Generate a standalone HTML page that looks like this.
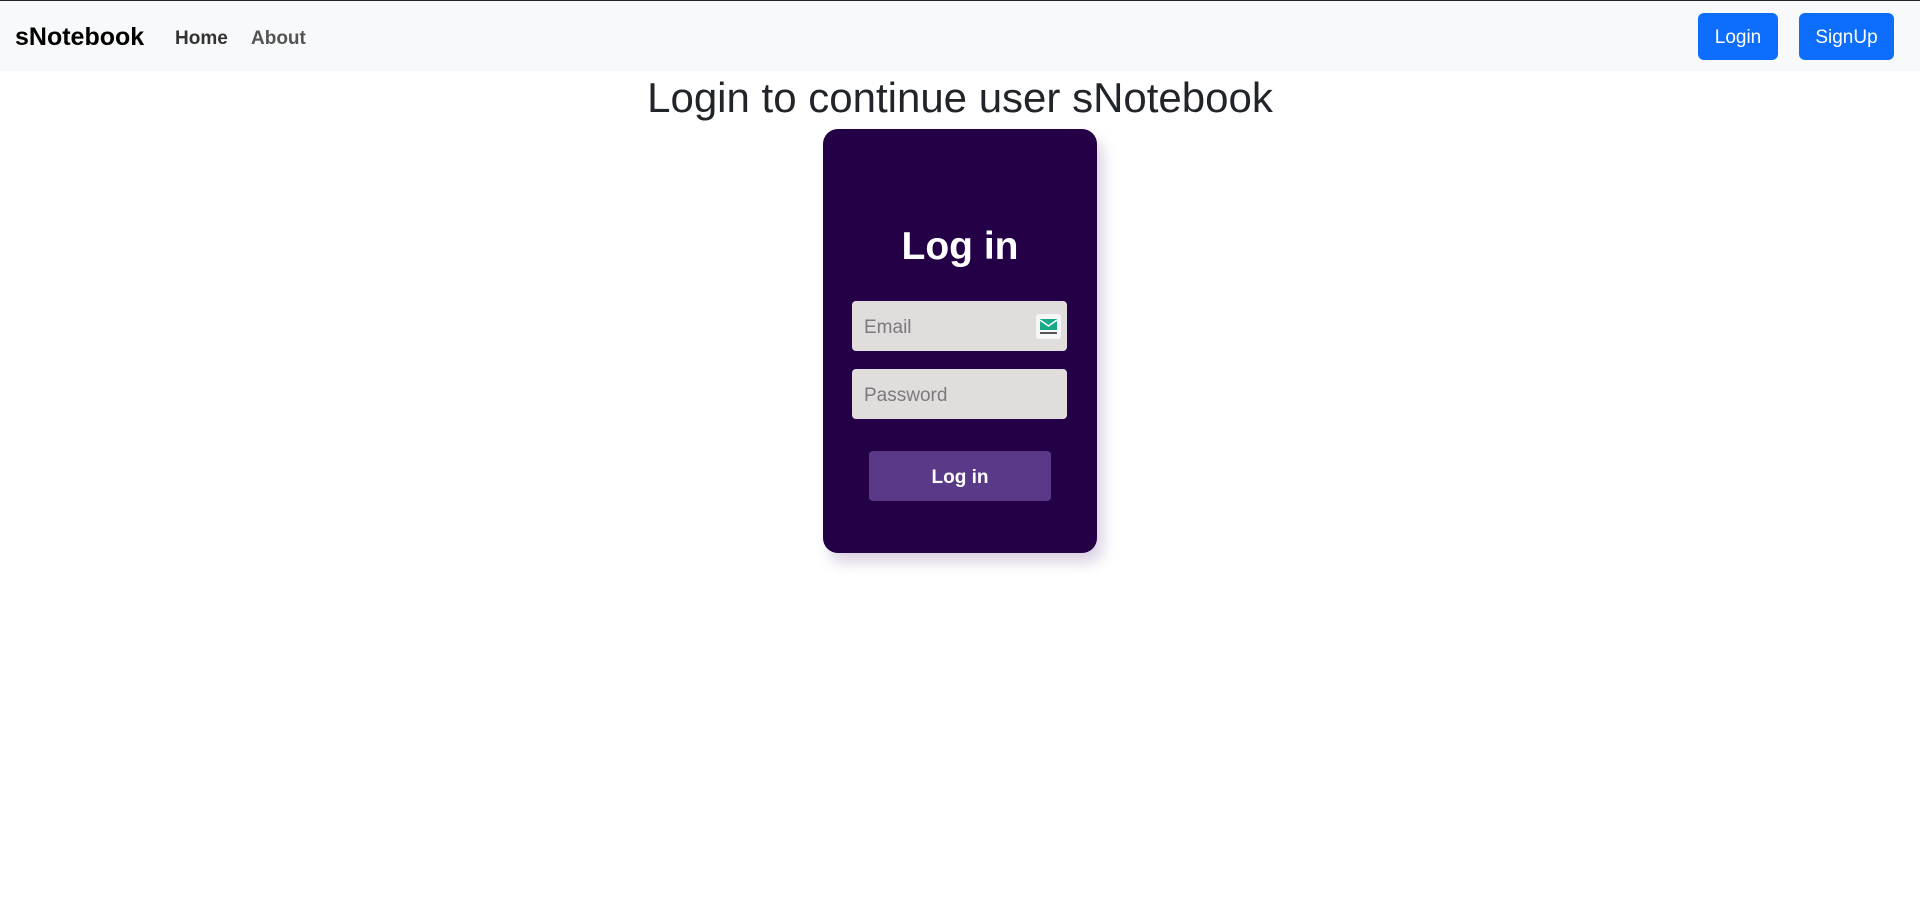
<!DOCTYPE html>
<html><head><style>
*{box-sizing:border-box;margin:0;padding:0}
body{width:1920px;height:916px;background:#fff;font-family:"Liberation Sans",sans-serif;overflow:hidden;border-top:1px solid #212529}
.nav{height:70px;background:#f8f9fa;position:relative}
.brand{position:absolute;left:15px;top:22px;font-size:25px;font-weight:bold;color:#000}
.link{position:absolute;top:27px;font-size:19px;font-weight:bold}
.btn{position:absolute;top:12px;height:47px;background:#0d6efd;color:#fff;border-radius:6px;font-size:19px;display:flex;align-items:center;justify-content:center;padding-top:2px}
h1{position:absolute;top:74px;left:0;width:1920px;text-align:center;font-size:42px;font-weight:normal;color:#212529}
.card{position:absolute;left:823px;top:129px;width:274px;height:424px;background:#240046;border-radius:15px;box-shadow:6px 10px 14px rgba(60,9,108,.18)}
.card h2{position:absolute;top:96px;width:100%;text-align:center;color:#fff;font-size:39px;font-weight:bold}
.in{position:absolute;left:29px;width:215px;height:50px;background:#e0dddd;border-radius:4px;color:#7d7a7d;font-size:19px;padding:16px 12px 0}
.lb{position:absolute;left:46px;top:322px;width:182px;height:50px;background:#5a3a88;border-radius:4px;color:#fff;font-weight:bold;font-size:19px;display:flex;align-items:center;justify-content:center;padding-top:3px}
.ic{position:absolute;right:6px;top:13px;width:25px;height:25px;background:#f7f7f7;border-radius:3px}
</style></head><body>
<div class="nav">
<div class="brand">sNotebook</div>
<div class="link" style="left:175px;color:#333">Home</div>
<div class="link" style="left:251px;color:#555">About</div>
<div class="btn" style="left:1698px;width:80px">Login</div>
<div class="btn" style="left:1799px;width:95px">SignUp</div>
</div>
<h1>Login to continue user sNotebook</h1>
<div class="card">
<h2>Log in</h2>
<div class="in" style="top:172px">Email<div class="ic"><svg width="25" height="25" viewBox="0 0 25 25"><rect x="4" y="5" width="17" height="11" fill="#1aa88a"/><path d="M4 6l8.5 6 8.5-6" stroke="#fff" stroke-width="1.5" fill="none"/><rect x="4" y="18" width="17" height="2" fill="#555"/></svg></div></div>
<div class="in" style="top:240px">Password</div>
<div class="lb">Log in</div>
</div>
</body></html>
